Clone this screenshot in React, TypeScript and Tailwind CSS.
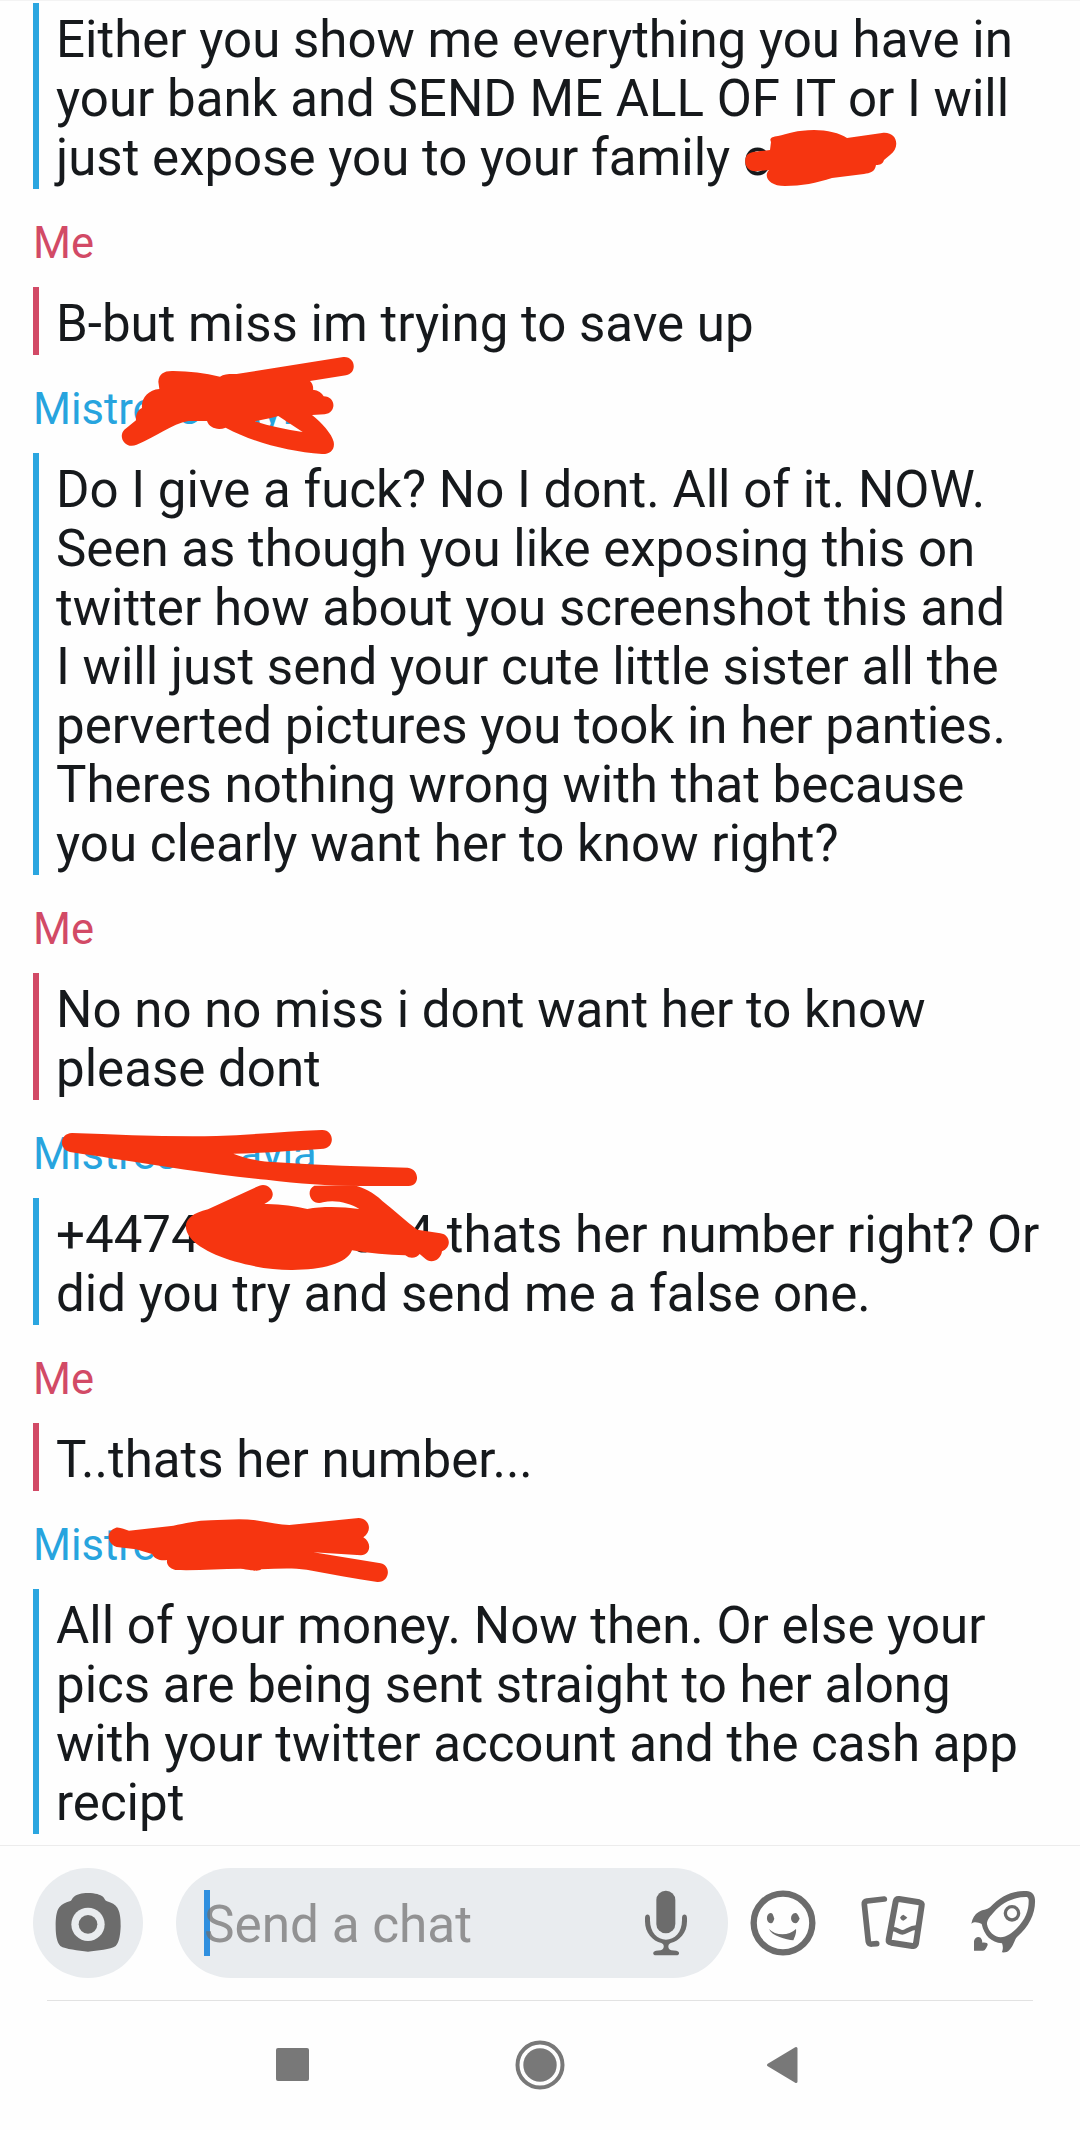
import React from "react";

interface Message {
  id: string;
  sender?: React.ReactNode;
  mine?: boolean;
  lines: React.ReactNode[];
}

const messages: Message[] = [
  {
    id: "1",
    lines: [
      "Either you show me everything you have in",
      "your bank and SEND ME ALL OF IT or I will",
      "just expose you to your family o",
    ],
  },
  { id: "2", sender: "Me", mine: true, lines: ["B-but miss im trying to save up"] },
  {
    id: "3",
    sender: (
      <>
        Mistress<span className="inline-block w-[38px]" />
        ayl
      </>
    ),
    lines: [
      "Do I give a fuck? No I dont. All of it. NOW.",
      "Seen as though you like exposing this on",
      "twitter how about you screenshot this and",
      "I will just send your cute little sister all the",
      "perverted pictures you took in her panties.",
      "Theres nothing wrong with that because",
      "you clearly want her to know right?",
    ],
  },
  {
    id: "4",
    sender: "Me",
    mine: true,
    lines: ["No no no miss i dont want her to know", "please dont"],
  },
  {
    id: "5",
    sender: (
      <>
        Mistress<span className="inline-block w-[38px]" />
        ayla
      </>
    ),
    lines: [
      <>
        +4474
        <span className="inline-block w-[149px]" />0
        <span className="inline-block w-[28px]" />4 thats her number right? Or
      </>,
      "did you try and send me a false one.",
    ],
  },
  { id: "6", sender: "Me", mine: true, lines: ["T..thats her number..."] },
  {
    id: "7",
    sender: "Mistress",
    lines: [
      "All of your money. Now then. Or else your",
      "pics are being sent straight to her along",
      "with your twitter account and the cash app",
      "recipt",
    ],
  },
];

function ChatMessage({ message }: { message: Message }) {
  return (
    <div>
      {message.sender && (
        <div
          className={`h-[98px] pt-[30px] text-[43.5px] leading-[50px] ${message.mine ? "text-[#d24a66]" : "text-[#27a4de]"}`}
        >
          {message.sender}
        </div>
      )}
      <div
        className={`border-l-6 pl-[17px] pt-[7px] pb-[2px] text-[51.05px] leading-[59px] text-[#16191c] ${message.mine ? "border-[#d24a66]" : "border-[#2ba6e0]"}`}
      >
        {message.lines.map((line, i) => (
          <p key={i}>{line}</p>
        ))}
      </div>
    </div>
  );
}

// Red marker strokes painted over the conversation
function MarkerStrokes() {
  return (
    <svg
      className="absolute left-0 top-0 pointer-events-none"
      width="1080"
      height="1845"
      viewBox="0 0 1080 1845"
      fill="#f63510"
    >
      <path d="M771 142C769 138 772 137 778 136C787 134 797 130 814 130C827 130 840 133 847 138L882 133C897 131 901 147 890 155L884 160C883 164 880 165 876 165C875 172 870 173 864 174L832 178C817 183 801 186 785 186C769 186 763 176 769 170L758 171C748 173 743 164 746 157C748 151 758 152 770 150Z" />
      <g transform="translate(0 340) scale(0.33333)">
        <path
          fillRule="evenodd"
          d="M475 125C477 101 492 92 520 93C568 94 615 99 660 110C672 101 690 102 710 102L1030 51C1067 48 1073 99 1038 106L930 123C937 130 941 140 939 149C955 151 966 158 971 169C1008 169 1011 219 974 223L936 225C965 248 996 282 1001 305C1006 331 988 343 966 342C866 334 764 309 677 263C653 272 628 264 621 243H565C515 252 469 290 410 314C377 329 352 291 373 269L408 241C407 222 413 211 426 204C423 175 445 149 478 147Z M764 244C810 259 859 269 908 276L835 228C814 234 790 239 764 244Z"
        />
      </g>
      <g transform="translate(0 1110) scale(0.33333)">
        <path d="M216 69C360 74 505 81 650 78C755 75 860 63 965 60C1002 58 1007 112 971 116C881 122 790 129 700 131C740 147 781 154 830 157C960 167 1093 170 1223 173C1259 177 1261 228 1226 228H1080C981 226 901 222 800 209C644 195 490 168 339 146C297 137 254 134 210 126C174 116 180 70 216 69Z" />
        <path d="M778 227C810 215 836 258 803 276L793 282C839 281 882 288 922 297C970 288 1027 290 1078 297C1048 279 1006 268 969 277C931 289 915 240 943 227L1062 226C1091 233 1120 247 1147 273C1184 301 1215 332 1252 359L1321 370C1352 374 1356 413 1326 424C1323 451 1292 464 1274 445L1259 432C1251 443 1232 449 1216 436C1163 436 1110 429 1056 421C1041 461 966 480 877 480C764 481 610 437 570 382C544 346 557 314 624 298Z" />
      </g>
      <g transform="translate(0 1480) scale(0.33333)">
        <path d="M348 143C362 141 374 150 387 152L520 137C553 131 591 121 632 121C681 119 731 113 780 123C812 128 839 134 868 135L1076 114C1108 115 1119 153 1090 172C1119 190 1109 226 1083 226L940 217L1142 250C1176 258 1168 308 1132 306C1062 296 991 281 920 269C875 263 830 266 784 268C773 276 760 271 722 266C658 267 591 272 526 270C507 265 499 253 501 240C483 243 465 239 456 222L408 208L350 201C318 190 319 152 348 143Z" />
      </g>
    </svg>
  );
}

function CameraIcon() {
  return (
    <svg width="66" height="60" viewBox="0 0 198 180">
      <path
        fill="#6c6c6c"
        d="M99 0C121 0 136 5 144 11C149 16 149 22 156 25C171 29 180 35 187 44C197 61 197 84 197 100C196 121 194 147 182 159C167 170 127 172 99 176C70 172 31 169 16 159C4 147 2 121 2 100C2 80 3 56 13 43C22 33 31 29 44 25C52 22 50 16 57 11C67 4 79 0 99 0Z"
      />
      <circle cx="99" cy="94" r="50" fill="#e9ecef" />
      <circle cx="99" cy="94" r="28" fill="#6c6c6c" />
    </svg>
  );
}

function MicIcon() {
  return (
    <svg width="42" height="66" viewBox="0 0 126 198" fill="#6c6c6c">
      <rect x="34" y="2" width="57" height="128" rx="28" />
      <path d="M0 84C0 70 15 70 15 84V91C15 127 37 149 63 149S111 127 111 91V84C111 70 126 70 126 84V94C126 130 103 153 77 159C67 163 68 178 79 181L94 182C105 184 105 196 94 196H33C22 196 22 184 33 182L47 181C58 178 60 163 49 159C23 153 0 130 0 94Z" />
    </svg>
  );
}

function SmileyIcon() {
  return (
    <svg width="66" height="66" viewBox="0 0 198 198" fill="#6c6c6c">
      <circle cx="99" cy="99" r="88" fill="none" stroke="#6c6c6c" strokeWidth="19" />
      <path d="M62 69C68 68 70 77 73 86C70 94 68 101 62 100C47 99 47 70 62 69Z" />
      <path d="M136 69C142 69 145 77 149 86C145 94 142 100 136 100C119 99 119 70 136 69Z" />
      <path d="M57 117C76 137 116 139 138 117C140 129 134 142 130 151C109 149 65 138 57 117Z" />
    </svg>
  );
}

function CardsIcon() {
  return (
    <svg
      width="66"
      height="66"
      viewBox="0 0 198 198"
      fill="none"
      stroke="#6c6c6c"
      strokeWidth="18"
      strokeLinecap="round"
      strokeLinejoin="round"
    >
      <path d="M73 27L21 33Q12 35 13 43L25 155Q27 163 36 162L50 161" strokeWidth="17" />
      <path d="M117 27L178 37Q187 39 185 47L168 160Q166 170 157 168L94 158Q85 156 86 149L107 35Q109 26 117 27Z" />
      <path d="M98 117C114 118 117 127 127 127C140 127 146 113 172 112" strokeWidth="14" strokeLinecap="butt" />
      <path d="M130 74Q137 79 142 83Q137 87 130 92Q124 91 120 83Q124 75 130 74Z" fill="#6c6c6c" stroke="none" />
    </svg>
  );
}

function RocketIcon() {
  return (
    <svg width="66" height="66" viewBox="0 0 198 198" fill="#6c6c6c">
      <path
        fillRule="evenodd"
        d="M165 3C184 1 194 12 195 29C197 70 178 109 141 141C132 151 132 167 118 180C112 187 104 188 95 187C99 180 100 170 96 160C63 157 43 137 35 102C24 97 14 94 4 101C7 85 14 73 26 66C37 59 51 60 60 52C91 18 127 2 165 3ZM170 21C132 20 94 40 72 66C61 78 50 90 51 103C54 124 74 142 92 142C110 141 126 128 139 116C168 88 177 58 176 29Q175 21 170 21Z"
      />
      <circle cx="126" cy="70" r="20" fill="none" stroke="#6c6c6c" strokeWidth="10" />
      <path d="M12 182V153C16 137 33 137 36 151L37 158C47 157 54 159 53 165C49 173 46 182 39 182Z" />
    </svg>
  );
}

export default function App() {
  return (
    <div className="relative flex h-[2130px] w-[1080px] flex-col overflow-hidden bg-[#fefefe] font-['Roboto',sans-serif] whitespace-nowrap">
      <div className="h-[1845px] border-t border-[#f3f3f3] px-[33px] pt-[2px]">
        {messages.map((message) => (
          <ChatMessage key={message.id} message={message} />
        ))}
      </div>

      {/* Input bar */}
      <div className="flex h-[155px] items-center border-t-1 border-[#ececec] pl-[33px]">
        <button className="flex size-[110px] items-center justify-center rounded-full bg-[#e9ecef]">
          <CameraIcon />
        </button>
        <div className="ml-[33px] flex h-[110px] w-[552px] items-center justify-between rounded-full bg-[#e9ecef] pr-[41px] pl-[28px]">
          <div className="flex items-center">
            <span className="h-[66px] w-[6px] bg-[#2f8fdf]" />
            <span className="relative -ml-[6px] pt-[4px] text-[51.3px] leading-[60px] text-[#6c6c6c]/70">
              Send a chat
            </span>
          </div>
          <MicIcon />
        </div>
        <div className="ml-[22px] flex gap-[44px]">
          <SmileyIcon />
          <CardsIcon />
          <RocketIcon />
        </div>
      </div>

      {/* System navigation */}
      <div className="mx-[47px] flex flex-1 items-start border-t border-[#e2e2e2] text-[#787878]">
        <div className="mt-[47px] ml-[229px] size-[33px] rounded-[2px] bg-[#787878]" />
        <svg className="mt-[39px] ml-[206px]" width="50" height="50" viewBox="0 0 50 50">
          <circle cx="25" cy="25" r="22.5" fill="none" stroke="currentColor" strokeWidth="4" />
          <circle cx="25" cy="25" r="16.7" fill="currentColor" />
        </svg>
        <svg className="mt-[45px] ml-[201px]" width="33" height="38" viewBox="0 0 33 38">
          <path
            d="M30 2.5V35.5L2.5 19Z"
            fill="currentColor"
            stroke="currentColor"
            strokeWidth="3"
            strokeLinejoin="round"
          />
        </svg>
      </div>

      <MarkerStrokes />
    </div>
  );
}
